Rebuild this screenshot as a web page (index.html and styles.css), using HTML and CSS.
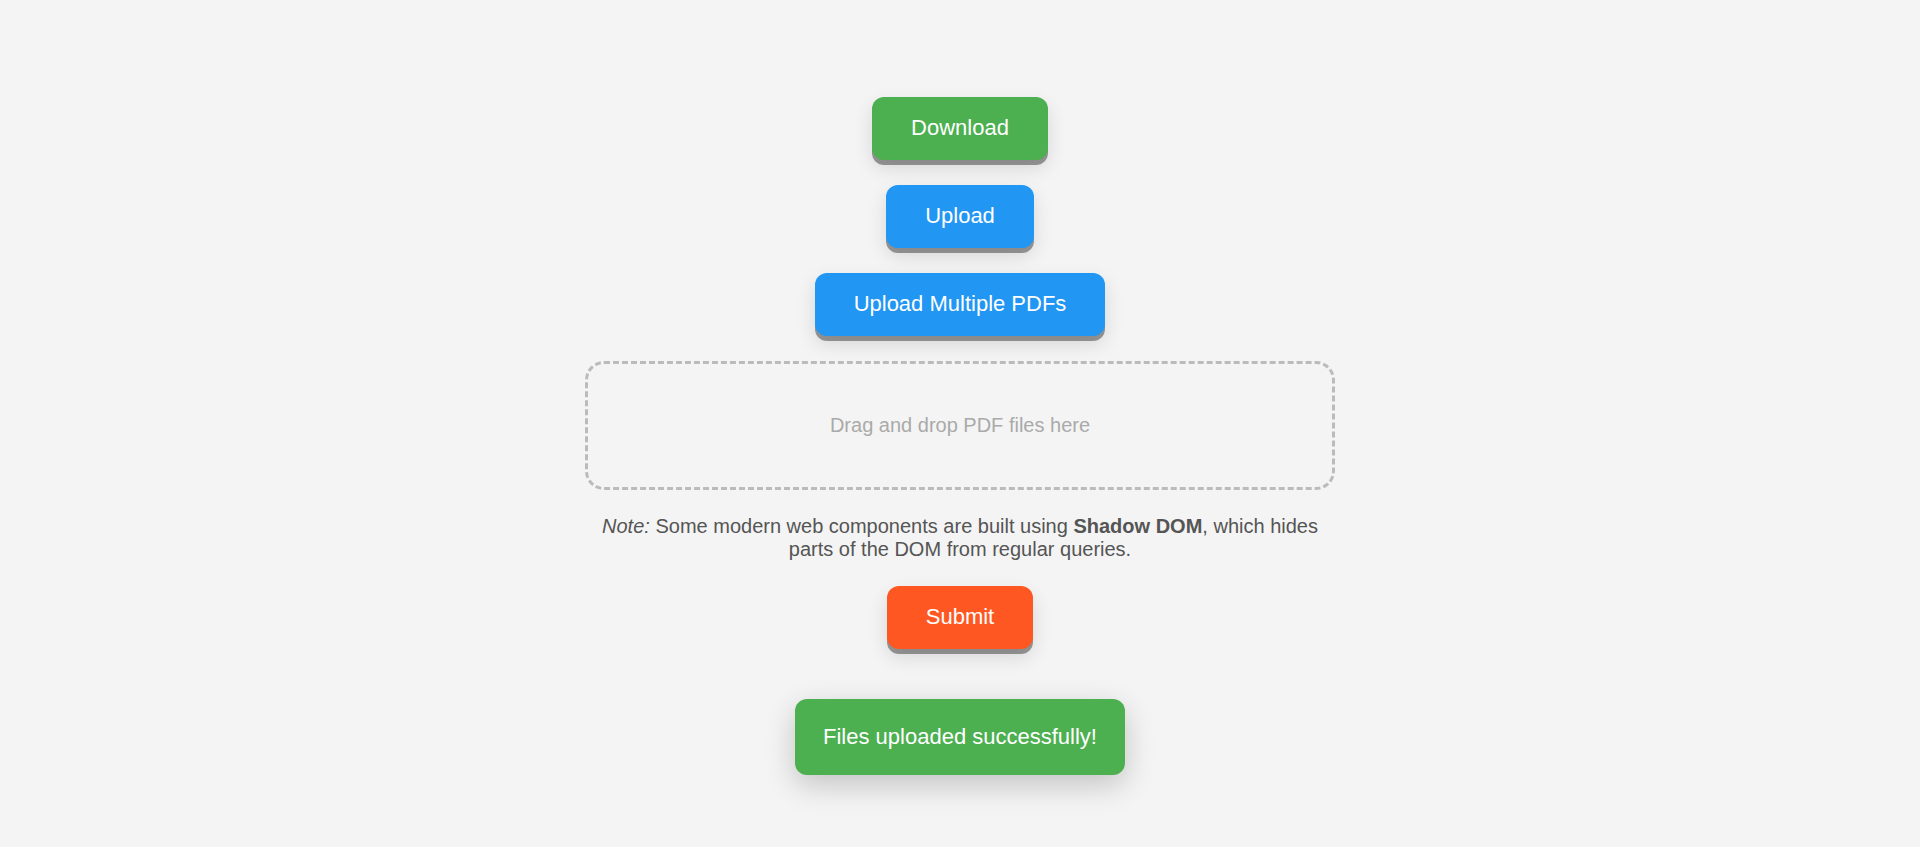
FILE: index.html
```html
<!DOCTYPE html>
<html lang="en">
<head>
<meta charset="UTF-8">
<meta name="viewport" content="width=device-width, initial-scale=1">
<title>PDF Upload</title>
<link rel="stylesheet" href="styles.css">
</head>
<body>
<main class="page">
  <button type="button" class="btn btn-download">Download</button>
  <button type="button" class="btn btn-upload">Upload</button>
  <button type="button" class="btn btn-upload">Upload Multiple PDFs</button>
  <div class="drop-zone">Drag and drop PDF files here</div>
  <p class="note"><em>Note:</em> Some modern web components are built using <strong>Shadow DOM</strong>, which hides parts of the DOM from regular queries.</p>
  <button type="submit" class="btn btn-submit">Submit</button>
  <div class="message" role="status">Files uploaded successfully!</div>
</main>
</body>
</html>
```
FILE: styles.css
```css
* {
  box-sizing: border-box;
}

body {
  margin: 0;
  background: #f4f4f4;
  font-family: "Liberation Sans", Arial, sans-serif;
}

.page {
  display: flex;
  flex-direction: column;
  align-items: center;
  gap: 25px;
  padding: 97px 20px 50px;
}

.btn {
  padding: 20px 39px 21px;
  border: 0;
  border-radius: 12px;
  color: #fff;
  font: 22px/22px "Liberation Sans", Arial, sans-serif;
  cursor: pointer;
  box-shadow: 0 8px 19px rgba(0, 0, 0, 0.12), 0 5px #999;
}

.btn-download {
  background: #4caf50;
}

.btn-upload {
  background: #2196f3;
}

.btn-submit {
  background: #ff5722;
}

.drop-zone {
  width: 750px;
  max-width: 100%;
  padding: 50px;
  border: 3px dashed #bbb;
  border-radius: 19px;
  color: #aaa;
  font-size: 20px;
  line-height: 23px;
  text-align: center;
}

.note {
  width: 750px;
  max-width: 100%;
  margin: 0;
  color: #555;
  font-size: 20px;
  line-height: 23px;
  text-align: center;
}

.message {
  margin-top: 25px;
  padding: 25px 28px;
  border-radius: 12px;
  background: #4caf50;
  color: #fff;
  font-size: 22px;
  line-height: 26px;
  box-shadow: 0 10px 30px rgba(0, 0, 0, 0.2);
}
```
